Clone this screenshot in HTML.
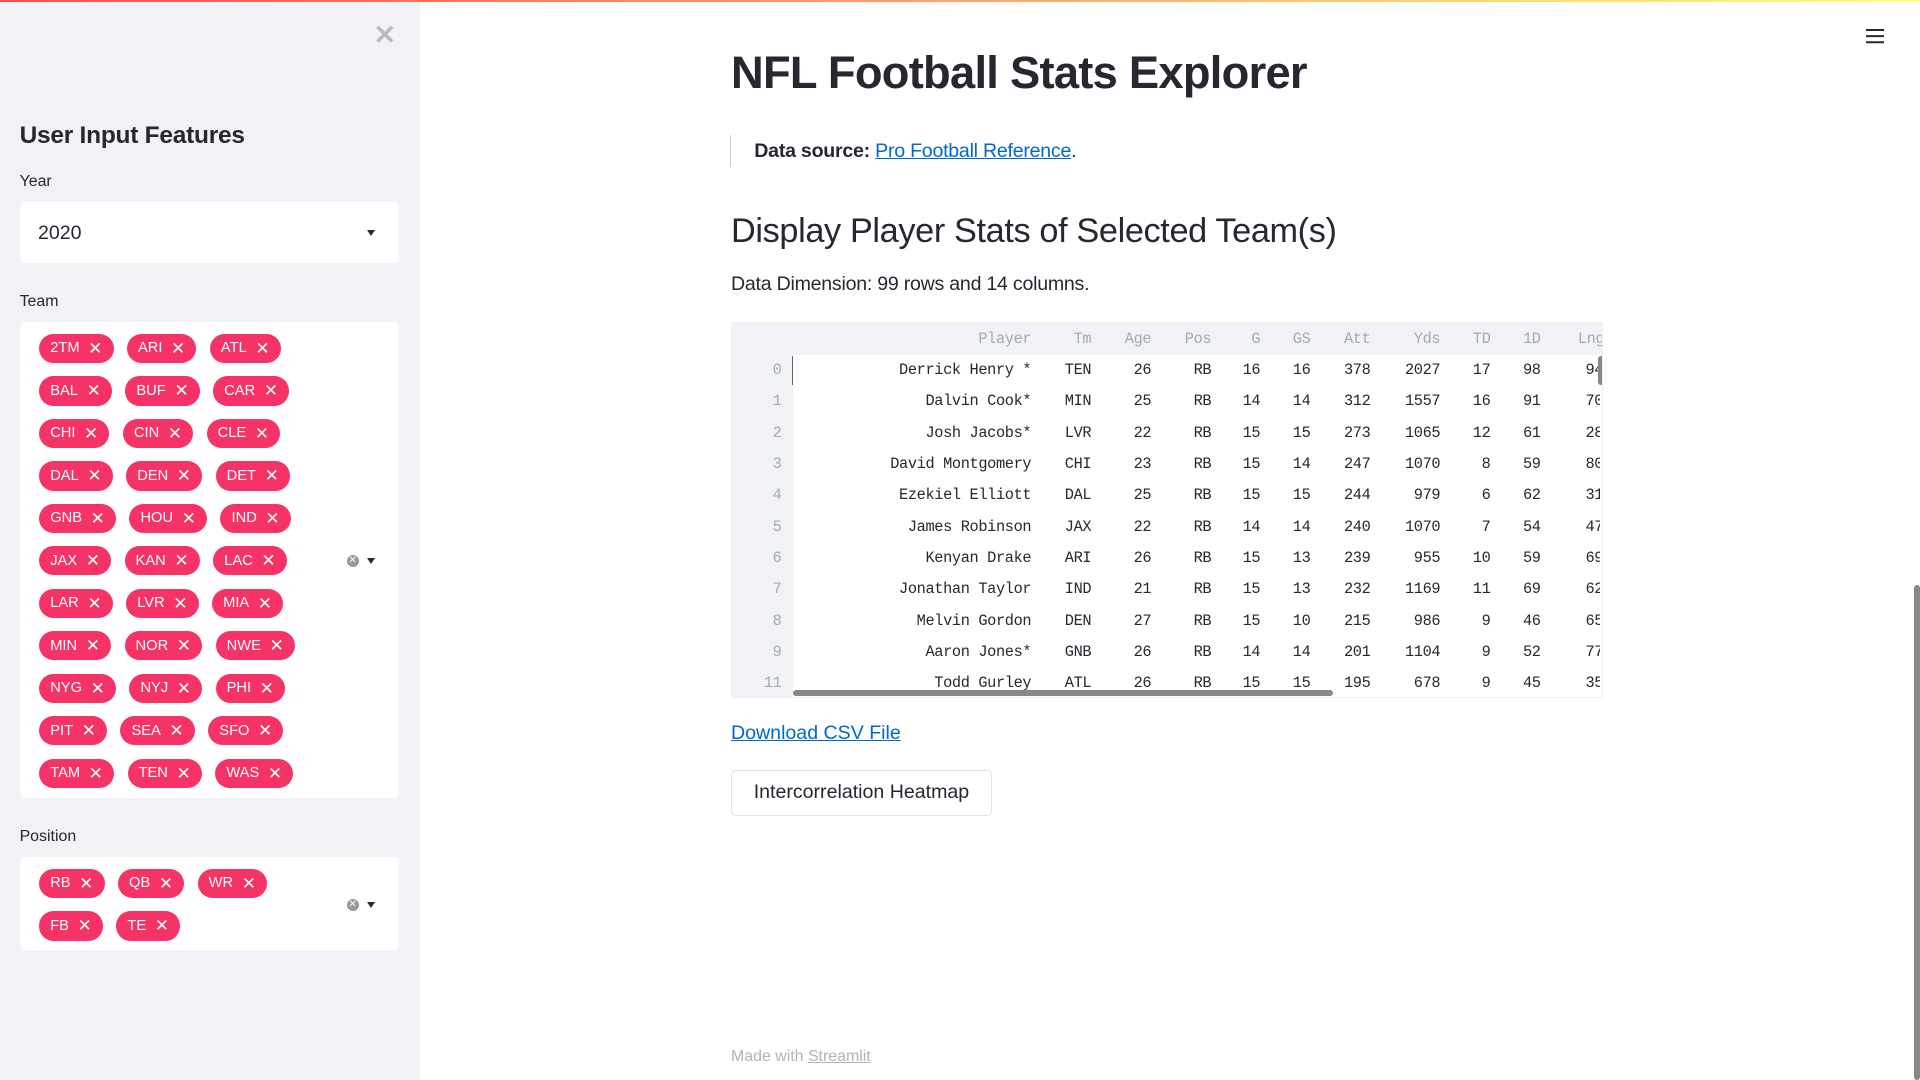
<!DOCTYPE html>
<html><head><meta charset="utf-8"><style>
*{box-sizing:border-box;margin:0;padding:0}
html,body{width:1920px;height:1080px;overflow:hidden;background:#fff}
#w{zoom:1.22449;width:1568px;height:882px;position:relative;font-family:"Liberation Sans",sans-serif;color:#262730}
.a{position:absolute;white-space:nowrap}
#bar{left:0;top:0;width:1568px;height:2px;background:linear-gradient(90deg,#ff4b4b,#fffd80)}
#side{left:0;top:2px;width:343px;height:880px;background:#f0f2f6}
.lbl{font-size:13px;color:#262730}
.box{background:#fff;border-radius:4px}
.row{position:absolute;left:32px;display:flex;gap:11px}
.tag{height:24px;border-radius:12px;background:#f63366;color:#fff;font-size:12px;display:flex;align-items:center;padding:0 9px 0 9px;gap:7px}
.tag b{font-weight:normal;font-size:14px;line-height:1}
.mono{font-family:"Liberation Mono",monospace;font-size:12.5px;letter-spacing:-0.3px}
.c{position:absolute;text-align:right}
</style></head><body><div id="w">
<div class="a" id="bar"></div>
<div class="a" id="side"></div>
<div class="a" style="left:305px;top:16px;font-size:22px;color:#b8bac0;font-weight:bold">✕</div>
<div class="a" style="left:16px;top:100px;font-size:20px;font-weight:bold;letter-spacing:-0.2px">User Input Features</div>
<div class="a lbl" style="left:16px;top:141px">Year</div>
<div class="a box" style="left:16px;top:165px;width:310px;height:50px"></div>
<div class="a" style="left:31px;top:181px;font-size:16px">2020</div>
<div class="a" style="left:300px;top:188px;border:4px solid transparent;border-top:5px solid #262730"></div>
<div class="a lbl" style="left:16px;top:239px">Team</div>
<div class="a box" style="left:16px;top:263px;width:310px;height:389px"></div>
<div class="a lbl" style="left:16px;top:676px">Position</div>
<div class="a box" style="left:16px;top:700px;width:310px;height:76px"></div>
<div class="a" style="left:283px;top:453px;width:10px;height:10px;border-radius:50%;background:#999;color:#fff;font-size:8px;text-align:center;line-height:10px">✕</div>
<div class="a" style="left:300px;top:456px;border:4px solid transparent;border-top:5px solid #262730"></div>
<div class="a" style="left:283px;top:734px;width:10px;height:10px;border-radius:50%;background:#999;color:#fff;font-size:8px;text-align:center;line-height:10px">✕</div>
<div class="a" style="left:300px;top:737px;border:4px solid transparent;border-top:5px solid #262730"></div>

<div class="a" style="left:1524px;top:24px;width:15px;height:1.3px;background:#262730;box-shadow:0 5px 0 #262730,0 10px 0 #262730"></div>

<div class="a" style="left:597px;top:38px;font-size:37px;font-weight:bold;letter-spacing:-0.6px">NFL Football Stats Explorer</div>
<div class="a" style="left:596px;top:110px;width:1px;height:26px;background:#ccc"></div>
<div class="a" style="left:616px;top:114px;font-size:16px;letter-spacing:-0.2px"><b>Data source:</b> <span style="color:#0068c9;text-decoration:underline">Pro Football Reference</span>.</div>
<div class="a" style="left:597px;top:173px;font-size:28px;letter-spacing:-0.3px">Display Player Stats of Selected Team(s)</div>
<div class="a" style="left:597px;top:223px;font-size:16px;letter-spacing:-0.2px">Data Dimension: 99 rows and 14 columns.</div>

<div class="a" style="left:597px;top:263px;width:712px;height:307px;border:1px solid #eef0f4;overflow:hidden" id="tbl">
<div class="a" style="left:0;top:0;width:712px;height:26px;background:#f0f2f6"></div>
<div class="a" style="left:0;top:0;width:50px;height:307px;background:#f0f2f6"></div>
<div class="a" style="left:49px;top:27px;width:1px;height:24px;background:#666"></div>
</div>
<div class="a" style="left:597px;top:590px;font-size:16px;color:#0068c9;text-decoration:underline">Download CSV File</div>
<div class="a" style="left:597px;top:629px;width:213px;height:37px;border:1px solid #e0e2e6;border-radius:4px;font-size:16px;text-align:center;line-height:35px">Intercorrelation Heatmap</div>
<div class="a" style="left:597px;top:856px;font-size:13px;color:#b0b3ba">Made with <span style="text-decoration:underline">Streamlit</span></div>
<div class="a" style="left:1563px;top:478px;width:5px;height:404px;border-radius:3px;background:#888"></div>
</div>
<script>
const W=document.getElementById('w');
const teams=[["2TM","ARI","ATL"],["BAL","BUF","CAR"],["CHI","CIN","CLE"],["DAL","DEN","DET"],["GNB","HOU","IND"],["JAX","KAN","LAC"],["LAR","LVR","MIA"],["MIN","NOR","NWE"],["NYG","NYJ","PHI"],["PIT","SEA","SFO"],["TAM","TEN","WAS"]];
let h='';
teams.forEach((r,i)=>{h+=`<div class="row" style="top:${272.5+i*34.7}px">`+r.map(t=>`<div class="tag">${t}<b>✕</b></div>`).join('')+'</div>';});
[["RB","QB","WR"],["FB","TE"]].forEach((r,i)=>{h+=`<div class="row" style="top:${709.5+i*34.7}px">`+r.map(t=>`<div class="tag">${t}<b>✕</b></div>`).join('')+'</div>';});
W.insertAdjacentHTML('beforeend',h);
const T=document.getElementById('tbl');
const rights=[246,295,344,393,433,474,523,580,621,662,714];
const hdr=["Player","Tm","Age","Pos","G","GS","Att","Yds","TD","1D","Lng"];
const data=[
[0,"Derrick Henry *","TEN",26,"RB",16,16,378,2027,17,98,94],
[1,"Dalvin Cook*","MIN",25,"RB",14,14,312,1557,16,91,70],
[2,"Josh Jacobs*","LVR",22,"RB",15,15,273,1065,12,61,28],
[3,"David Montgomery","CHI",23,"RB",15,14,247,1070,8,59,80],
[4,"Ezekiel Elliott","DAL",25,"RB",15,15,244,979,6,62,31],
[5,"James Robinson","JAX",22,"RB",14,14,240,1070,7,54,47],
[6,"Kenyan Drake","ARI",26,"RB",15,13,239,955,10,59,69],
[7,"Jonathan Taylor","IND",21,"RB",15,13,232,1169,11,69,62],
[8,"Melvin Gordon","DEN",27,"RB",15,10,215,986,9,46,65],
[9,"Aaron Jones*","GNB",26,"RB",14,14,201,1104,9,52,77],
[11,"Todd Gurley","ATL",26,"RB",15,15,195,678,9,45,35]];
let t='';
hdr.forEach((x,i)=>{t+=`<div class="c mono" style="right:${712-rights[i]}px;top:6px;color:#a3a8b4">${x}</div>`});
data.forEach((r,j)=>{const y=31+j*25.6;
t+=`<div class="c mono" style="right:670px;top:${y}px;color:#a3a8b4">${r[0]}</div>`;
for(let i=1;i<r.length;i++)t+=`<div class="c mono" style="right:${712-rights[i-1]}px;top:${y}px;color:#262730;${i==11?'width:12px;overflow:hidden;text-align:left;right:auto;left:697px':''}">${r[i]}</div>`;});
t+=`<div class="a" style="left:707px;top:27px;width:5px;height:24px;border-radius:3px;background:#888"></div><div class="a" style="left:50px;top:300px;width:441px;height:5px;border-radius:3px;background:#888"></div>`;
T.insertAdjacentHTML('beforeend',t);
</script>
</body></html>
